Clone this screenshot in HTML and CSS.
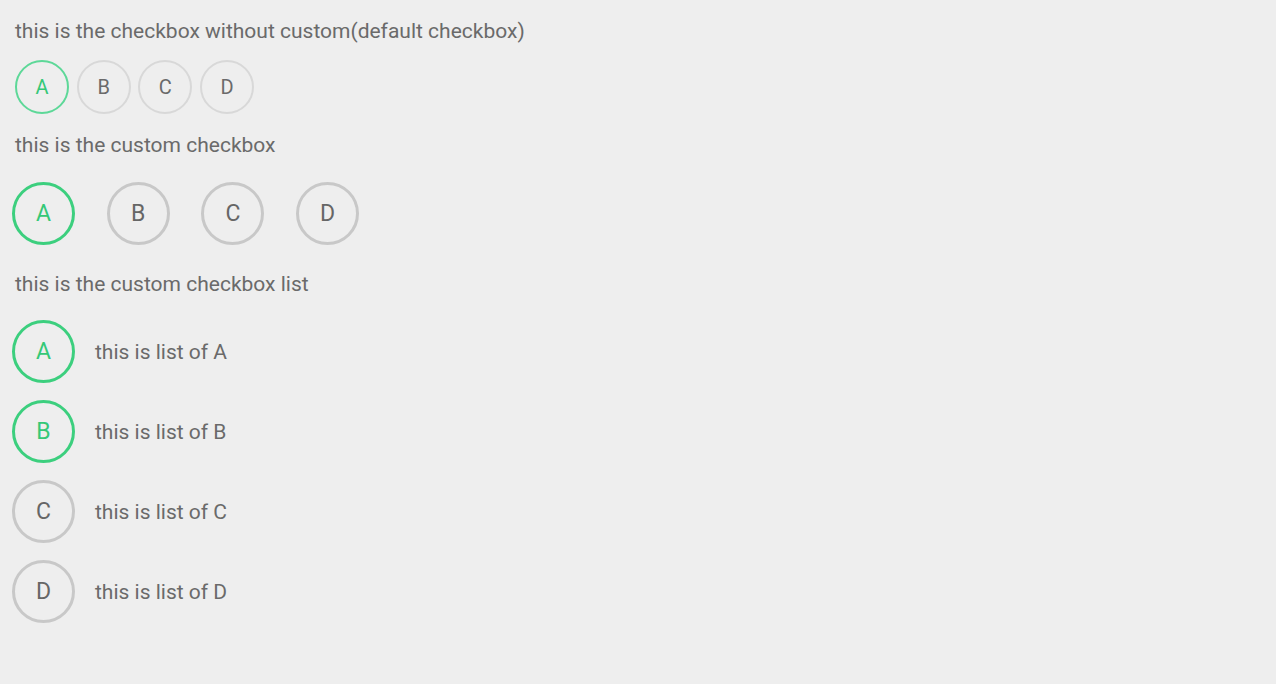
FILE: index.html
```html
<!DOCTYPE html>
<html>
<head>
<meta charset="utf-8">
<link rel="stylesheet" href="styles.css">
</head>
<body>
<div class="page">
  <div class="title t1">this is the checkbox without custom(default checkbox)</div>
  <div class="row-default">
    <span class="dbox on">A</span>
    <span class="dbox">B</span>
    <span class="dbox">C</span>
    <span class="dbox">D</span>
  </div>
  <div class="title t2">this is the custom checkbox</div>
  <div class="row-custom">
    <span class="cbox on">A</span>
    <span class="cbox">B</span>
    <span class="cbox">C</span>
    <span class="cbox">D</span>
  </div>
  <div class="title t3">this is the custom checkbox list</div>
  <ul class="list">
    <li class="item"><span class="cbox on">A</span><span class="label">this is list of A</span></li>
    <li class="item"><span class="cbox on">B</span><span class="label">this is list of B</span></li>
    <li class="item"><span class="cbox">C</span><span class="label">this is list of C</span></li>
    <li class="item"><span class="cbox">D</span><span class="label">this is list of D</span></li>
  </ul>
</div>
</body>
</html>
```

FILE: styles.css
```css
html, body {
  margin: 0;
  padding: 0;
  background: #eeeeee;
}
body {
  font-family: Roboto, "Liberation Sans", Arial, sans-serif;
  color: #6a6a6a;
  width: 1276px;
  height: 684px;
  overflow: hidden;
}
.page {
  padding: 19px 0 0 15px;
}
.title {
  font-size: 21px;
  line-height: 24px;
  height: 24px;
}
.row-default {
  display: flex;
  gap: 7.7px;
  margin-top: 17px;
}
.dbox {
  box-sizing: border-box;
  width: 54px;
  height: 54px;
  border: 2px solid #d8d8d8;
  border-radius: 50%;
  display: flex;
  align-items: center;
  justify-content: center;
  font-size: 20px;
  color: #6a6a6a;
}
.dbox.on {
  border-color: #5dd898;
  color: #35c877;
}
.t2 {
  margin-top: 19px;
}
.row-custom {
  display: flex;
  gap: 31.7px;
  margin: 25px 0 0 -3px;
}
.cbox {
  box-sizing: border-box;
  width: 63px;
  height: 63px;
  flex: none;
  border: 3px solid #c8c8c8;
  border-radius: 50%;
  display: flex;
  align-items: center;
  justify-content: center;
  font-size: 23px;
  color: #666666;
}
.cbox.on {
  border-color: #3ccf7e;
  color: #35c877;
}
.t3 {
  margin-top: 27px;
}
.list {
  list-style: none;
  margin: 24px 0 0 -3px;
  padding: 0;
  display: flex;
  flex-direction: column;
  gap: 17px;
}
.item {
  display: flex;
  align-items: center;
}
.label {
  margin-left: 20px;
  font-size: 21px;
  color: #6a6a6a;
}
```
